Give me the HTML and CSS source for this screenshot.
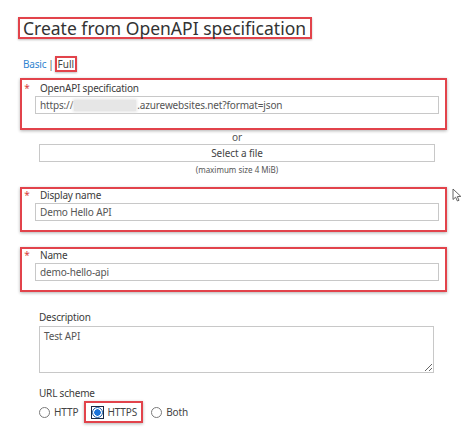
FILE: index.html
```html
<!DOCTYPE html>
<html>
<head>
<meta charset="utf-8">
<link rel="stylesheet" href="styles.css">
</head>
<body>
<div class="page">
  <h1 class="title">Create from OpenAPI specification</h1>
  <div class="modes"><a class="mode-link">Basic</a><span class="sep">|</span><span class="mode-current">Full</span></div>

  <div class="req-box req-box--spec">
    <div class="req-label"><span class="star">*</span><span>OpenAPI specification</span></div>
    <div class="text-input"><span>https://</span><span class="redacted"></span><span>.azurewebsites.net?format=json</span></div>
  </div>

  <div class="file-area">
    <div class="or">or</div>
    <div class="file-btn">Select a file</div>
    <div class="note">(maximum size 4 MiB)</div>
  </div>

  <div class="req-box req-box--display">
    <div class="req-label"><span class="star">*</span><span>Display name</span></div>
    <div class="text-input">Demo Hello API</div>
  </div>

  <div class="req-box req-box--name">
    <div class="req-label"><span class="star">*</span><span>Name</span></div>
    <div class="text-input">demo-hello-api</div>
  </div>

  <div class="plain-field plain-field--desc">
    <div class="plain-label">Description</div>
    <textarea class="desc" readonly>Test API</textarea>
  </div>

  <div class="plain-field plain-field--scheme">
    <div class="plain-label">URL scheme</div>
    <div class="radios">
      <span class="radio-opt"><span class="radio"></span><span>HTTP</span></span>
      <span class="radio-opt radio-opt--hl"><span class="focus-ring"><span class="radio radio--on"></span></span><span>HTTPS</span></span>
      <span class="radio-opt"><span class="radio"></span><span>Both</span></span>
    </div>
  </div>

  <svg class="cursor" width="10" height="14" viewBox="0 0 10 14"><path d="M1 1 L1 11.5 L3.6 9.2 L5.4 13 L7 12.3 L5.3 8.6 L8.8 8.4 Z" fill="#fff" stroke="#555" stroke-width="0.9" stroke-linejoin="round"/></svg>
</div>
</body>
</html>
```
FILE: styles.css
```css
html, body {
  margin: 0;
  padding: 0;
  background: #ffffff;
}
body {
  font-family: "Noto Sans", "Open Sans", sans-serif;
  color: #3b3b3b;
}
.page {
  position: relative;
  width: 474px;
  height: 428px;
  padding: 17px 0 0 18px;
  box-sizing: border-box;
}
.title {
  display: inline-block;
  margin: 0;
  padding: 0 4px 0 3px;
  font-size: 17.5px;
  font-weight: 400;
  line-height: 18px;
  height: 18px;
  border: 2px solid #e2434b;
  box-shadow: 0 1px 2px rgba(0,0,0,0.25);
  color: #333;
}
.modes {
  margin-top: 16px;
  display: flex;
  align-items: center;
  font-size: 10px;
  line-height: 14px;
  height: 16px;
  margin-left: 5px;
  letter-spacing: -0.2px;
}
.mode-link {
  color: #2f84d0;
}
.sep {
  margin: 0 1px 0 2px;
  color: #555;
}
.mode-current {
  border: 2px solid #e2434b;
  padding: 0 1px 0 1px;
  color: #444;
  line-height: 12px;
  letter-spacing: 0;
  box-shadow: 0 1px 2px rgba(0,0,0,0.25);
}
.req-box {
  margin-left: 2px;
  width: 427px;
  box-sizing: border-box;
  border: 2px solid #e2434b;
  box-shadow: 0 1px 3px rgba(0,0,0,0.3);
  padding: 0 6px 9px 0;
}
.req-box--spec {
  margin-top: 6px;
  padding-top: 2px;
  padding-bottom: 14px;
}
.req-box--display {
  margin-top: 12px;
}
.req-box--name {
  margin-top: 15px;
}
.req-label {
  display: flex;
  align-items: center;
  font-size: 10px;
  letter-spacing: -0.2px;
  line-height: 12px;
  height: 12px;
  color: #3b3b3b;
}
.star {
  width: 10px;
  text-align: center;
  color: #d83b3b;
  margin-right: 8px;
  font-size: 10px;
}
.text-input {
  margin: 2px 0 0 13px;
  height: 18px;
  box-sizing: border-box;
  border: 1px solid #c8c8c8;
  padding: 0 4px;
  display: flex;
  align-items: center;
  font-size: 10px;
  letter-spacing: -0.15px;
  color: #555;
  white-space: nowrap;
}
.redacted {
  display: inline-block;
  width: 62px;
  height: 11px;
  background: #e6e6e6;
  box-shadow: 0 0 3px 1px #e6e6e6;
  margin: 0 1px;
}
.file-area {
  margin-left: 21px;
  width: 396px;
  text-align: center;
  margin-top: 1px;
}
.or {
  font-size: 10px;
  line-height: 12px;
  color: #555;
}
.file-btn {
  margin-top: 1px;
  height: 18px;
  box-sizing: border-box;
  border: 1px solid #c8c8c8;
  font-size: 10px;
  letter-spacing: -0.1px;
  line-height: 16px;
  color: #444;
}
.note {
  font-size: 8px;
  line-height: 11px;
  margin-top: 2px;
  color: #555;
}
.plain-field {
  margin-left: 21px;
  width: 396px;
}
.plain-field--desc {
  margin-top: 18px;
}
.plain-label {
  font-size: 10px;
  letter-spacing: -0.2px;
  line-height: 14px;
  color: #3b3b3b;
}
.desc {
  display: block;
  margin: 2px 0 0 0;
  width: 395px;
  height: 47px;
  box-sizing: border-box;
  border: 1px solid #c8c8c8;
  padding: 2px 4px;
  font-family: "Noto Sans", "Open Sans", sans-serif;
  font-size: 10px;
  letter-spacing: -0.15px;
  line-height: 14px;
  color: #555;
  resize: vertical;
  outline: none;
}
.plain-field--scheme {
  margin-top: 13px;
}
.radios {
  margin-top: 1px;
  display: flex;
  align-items: center;
  height: 22px;
  font-size: 10px;
  letter-spacing: -0.1px;
  color: #444;
}
.radio-opt {
  display: inline-flex;
  align-items: center;
  gap: 4px;
  margin-right: 8px;
}
.radio-opt--hl {
  border: 2px solid #e2434b;
  box-shadow: 0 1px 3px rgba(0,0,0,0.3);
  height: 22px;
  box-sizing: border-box;
  padding: 0 4px 0 5px;
  gap: 3px;
  margin-left: -2px;
}
.radio {
  width: 11px;
  height: 11px;
  box-sizing: border-box;
  border: 1px solid #7a7a7a;
  border-radius: 50%;
  display: inline-block;
  background: #fff;
}
.radio--on {
  border-color: #1d5fa8;
  background: radial-gradient(circle, #1a73d9 0 3px, #fff 3.5px 100%);
}
.focus-ring {
  display: inline-flex;
  border: 1px solid #1b2a44;
  padding: 0;
}
.cursor {
  position: absolute;
  left: 452px;
  top: 188px;
}
```
